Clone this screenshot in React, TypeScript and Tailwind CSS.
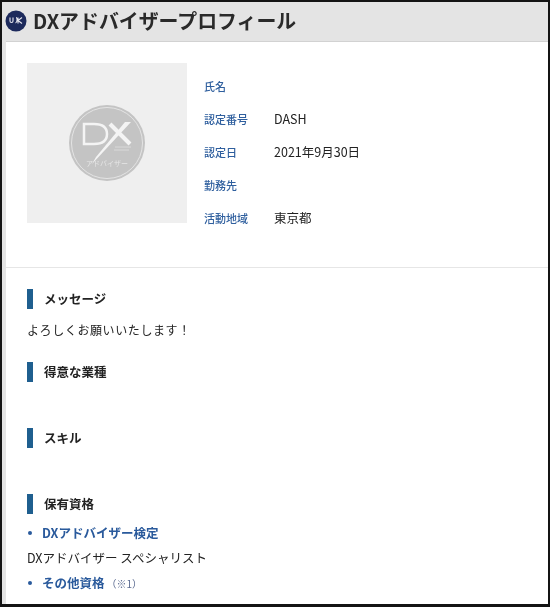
const font = { fontFamily: '"Noto Sans CJK JP", "Noto Sans", sans-serif' };

function Row({ label, value }: { label: string; value?: string }) {
  return (
    <div className="flex h-[33px] items-center">
      <div className="w-[70px] text-[11px] font-medium text-[#2f5f9e]">{label}</div>
      <div className="text-[12.5px] text-[#222]">{value}</div>
    </div>
  );
}

function Heading({ children, className }: { children: string; className: string }) {
  return (
    <div className={`flex h-5 items-center gap-[11px] ${className}`}>
      <div className="h-5 w-1.5 bg-[#1f5f8f]" />
      <div className="text-[12.5px] font-bold text-[#222]">{children}</div>
    </div>
  );
}

function Emblem() {
  return (
    <svg width="76" height="76" viewBox="0 0 76 76">
      <circle cx="38" cy="38" r="38" fill="#c4c4c4" />
      <circle cx="38" cy="38" r="35.5" fill="none" stroke="#e4e4e4" strokeWidth="1" />
      <path d="M15 19h10c9 0 13 4 13 10s-4 10-13 10H15z" fill="none" stroke="#f4f4f4" strokeWidth="2.5" />
      <path d="M41 19l20 20" fill="none" stroke="#f4f4f4" strokeWidth="4" />
      <path d="M62 17L23 59l4-7 29-35z" fill="#f4f4f4" />
      <path d="M46 42h16M45 45h15" stroke="#e4e4e4" strokeWidth="0.7" />
      <text x="38" y="61" textAnchor="middle" fontSize="7" fill="#e6e6e6" style={font}>アドバイザー</text>
    </svg>
  );
}

export default function App() {
  return (
    <div className="h-[610px] w-[550px] overflow-hidden bg-white">
      <div className="flex h-[607px] w-[550px] flex-col border-2 border-b-[3px] border-[#141414] bg-[#e4e4e4] blur-[0.4px]" style={font}>
        <header className="flex h-[39px] shrink-0 items-center gap-[6px] pb-[2px] pl-[3px]">
          <svg width="22" height="22" viewBox="0 0 22 22">
            <circle cx="11" cy="11" r="10.5" fill="#1d2a5c" />
            <path d="M5 7.5v3.5c0 2 3 2 3 0V7.5" fill="none" stroke="#e8e8f0" strokeWidth="1.1" />
            <path d="M11 7.5c1.5 0 1.5 5-.5 5.5M13 7.5v6M17 7.5l-4 3 4 3" fill="none" stroke="#e8e8f0" strokeWidth="1.1" />
          </svg>
          <h1 className="text-[19.9px] leading-none font-bold text-[#2a2a2a]">DXアドバイザープロフィール</h1>
        </header>
        <main className="ml-1 flex-1 border-t border-[#d2d2d2] bg-white">
          <section className="h-[226px] border-b border-[#e6e6e6] pt-[21px] pl-[21px]">
            <div className="flex items-start">
              <div className="flex h-[160px] w-[160px] items-center justify-center bg-[#efefef]">
                <Emblem />
              </div>
              <div className="pt-[7px] pl-[17px]">
                <Row label="氏名" />
                <Row label="認定番号" value="DASH" />
                <Row label="認定日" value="2021年9月30日" />
                <Row label="勤務先" />
                <Row label="活動地域" value="東京都" />
              </div>
            </div>
          </section>
          <section className="pl-[21px]">
            <Heading className="mt-[21px]">メッセージ</Heading>
            <p className="mt-[11px] text-[12px] leading-[20px] tracking-[0.6px] text-[#222]">よろしくお願いいたします！</p>
            <Heading className="mt-[22px]">得意な業種</Heading>
            <Heading className="mt-[46px]">スキル</Heading>
            <Heading className="mt-[46px]">保有資格</Heading>
            <div className="mt-[9px] flex h-5 items-center text-[12.5px] font-bold text-[#2a5a9c]">
              <span className="ml-[1px] h-1 w-1 rounded-full bg-[#2a5a9c]" />
              <span className="ml-[10px]">DXアドバイザー検定</span>
            </div>
            <p className="mt-[5px] text-[12.5px] leading-5 text-[#222]">DXアドバイザー スペシャリスト</p>
            <div className="mt-[5px] flex h-5 items-center text-[12.5px] font-bold text-[#2a5a9c]">
              <span className="ml-[1px] h-1 w-1 rounded-full bg-[#2a5a9c]" />
              <span className="ml-[10px]">その他資格</span>
              <span className="ml-[2px] text-[10px] font-normal text-[#5a6a90]">（※1）</span>
            </div>
          </section>
        </main>
      </div>
    </div>
  );
}
